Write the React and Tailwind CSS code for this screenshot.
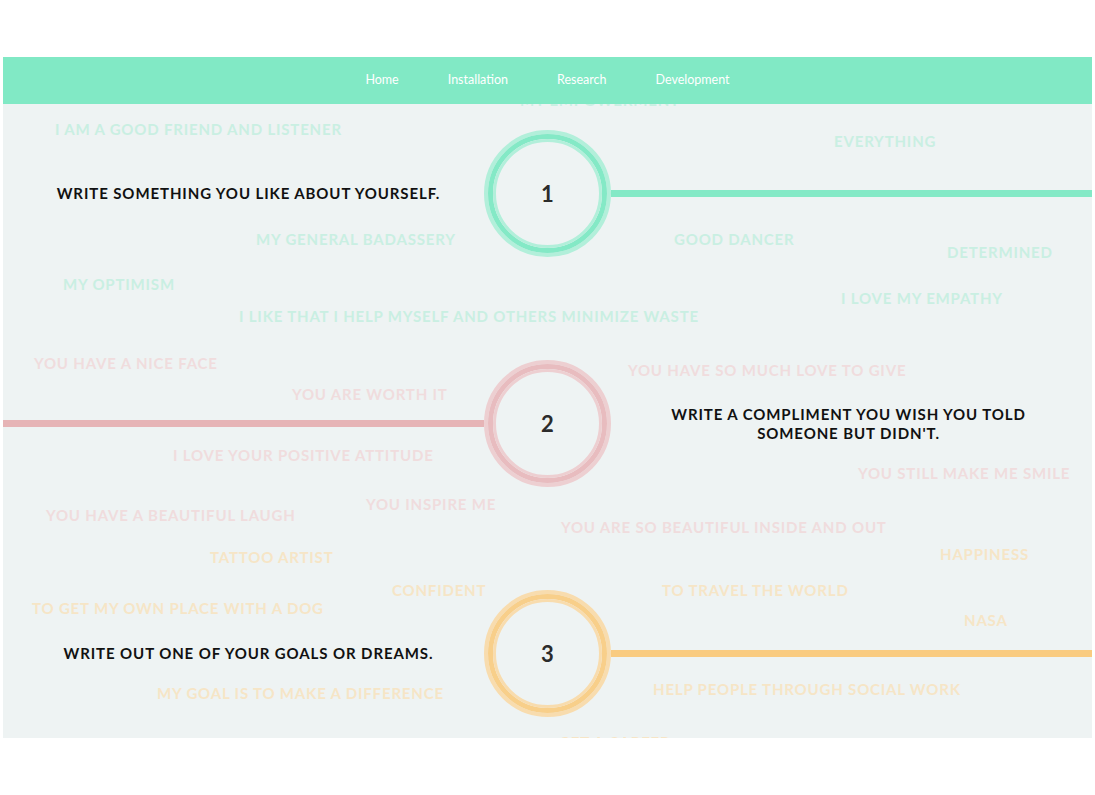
import React from "react";

const links = ["Home", "Installation", "Research", "Development"];

// scattered answers, positioned on the canvas (left/top in px)
const words = [
  { t: "MY EMPOWERMENT", x: 517, y: -13, c: "text-[#c9efe2]" },
  { t: "I AM A GOOD FRIEND AND LISTENER", x: 52, y: 16, c: "text-[#c9efe2]" },
  { t: "EVERYTHING", x: 831, y: 28, c: "text-[#c9efe2]" },
  { t: "MY GENERAL BADASSERY", x: 253, y: 126, c: "text-[#c9efe2]" },
  { t: "GOOD DANCER", x: 671, y: 126, c: "text-[#c9efe2]" },
  { t: "DETERMINED", x: 944, y: 139, c: "text-[#c9efe2]" },
  { t: "MY OPTIMISM", x: 60, y: 171, c: "text-[#c9efe2]" },
  { t: "I LOVE MY EMPATHY", x: 838, y: 185, c: "text-[#c9efe2]" },
  { t: "I LIKE THAT I HELP MYSELF AND OTHERS MINIMIZE WASTE", x: 236, y: 203, c: "text-[#c9efe2]" },
  { t: "YOU HAVE A NICE FACE", x: 31, y: 250, c: "text-[#f0dcdd]" },
  { t: "YOU HAVE SO MUCH LOVE TO GIVE", x: 625, y: 257, c: "text-[#f0dcdd]" },
  { t: "YOU ARE WORTH IT", x: 289, y: 281, c: "text-[#f0dcdd]" },
  { t: "I LOVE YOUR POSITIVE ATTITUDE", x: 170, y: 342, c: "text-[#f0dcdd]" },
  { t: "YOU STILL MAKE ME SMILE", x: 855, y: 360, c: "text-[#f0dcdd]" },
  { t: "YOU INSPIRE ME", x: 363, y: 391, c: "text-[#f0dcdd]" },
  { t: "YOU HAVE A BEAUTIFUL LAUGH", x: 43, y: 402, c: "text-[#f0dcdd]" },
  { t: "YOU ARE SO BEAUTIFUL INSIDE AND OUT", x: 558, y: 414, c: "text-[#f0dcdd]" },
  { t: "TATTOO ARTIST", x: 207, y: 444, c: "text-[#f6e5c6]" },
  { t: "HAPPINESS", x: 937, y: 441, c: "text-[#f6e5c6]" },
  { t: "CONFIDENT", x: 389, y: 477, c: "text-[#f6e5c6]" },
  { t: "TO TRAVEL THE WORLD", x: 659, y: 477, c: "text-[#f6e5c6]" },
  { t: "TO GET MY OWN PLACE WITH A DOG", x: 29, y: 495, c: "text-[#f6e5c6]" },
  { t: "NASA", x: 961, y: 507, c: "text-[#f6e5c6]" },
  { t: "MY GOAL IS TO MAKE A DIFFERENCE", x: 154, y: 580, c: "text-[#f6e5c6]" },
  { t: "HELP PEOPLE THROUGH SOCIAL WORK", x: 650, y: 576, c: "text-[#f6e5c6]" },
  { t: "GET A CAREER", x: 556, y: 629, c: "text-[#f6e5c6]" },
];

const Ring = ({ n, light, mid }) => (
  <div className={`w-[127px] h-[127px] shrink-0 rounded-full border-4 ${light}`}>
    <div className={`w-full h-full rounded-full border-[5px] ${mid}`}>
      <div className={`w-full h-full rounded-full border-[3px] ${light} flex items-center justify-center`}>
        <span className="text-[22px] font-bold text-[#2b2b2b]">{n}</span>
      </div>
    </div>
  </div>
);

const Prompt = ({ children, className = "" }) => (
  <div className="flex-1 flex items-center justify-center">
    <p className={`text-center text-[15px] leading-[19px] font-bold tracking-[0.06em] text-[#111] ${className}`}>
      {children}
    </p>
  </div>
);

const Line = ({ color }) => (
  <div className="flex-1 flex items-center">
    <div className={`w-full h-[7px] ${color}`} />
  </div>
);

export default function App() {
  return (
    <div className="min-h-[795px] bg-white pt-[57px] pl-[3px]" style={{ fontFamily: "Lato, 'Noto Sans', sans-serif" }}>
      <div className="w-[1089px]">
        <nav className="relative z-20 h-[47px] bg-[#81e9c5] flex items-center justify-center gap-[49px] text-[12.5px] text-white">
          {links.map((l) => (
            <a key={l} href="#" className="leading-none">
              {l}
            </a>
          ))}
        </nav>

        <section className="relative h-[634px] bg-[#eef3f3] overflow-hidden">
          {words.map((w) => (
            <span
              key={w.t}
              className={`absolute whitespace-nowrap text-[15px] leading-[18px] font-bold tracking-[0.055em] ${w.c}`}
              style={{ left: w.x, top: w.y }}
            >
              {w.t}
            </span>
          ))}

          <div className="relative z-10 flex flex-col gap-[103px] pt-[26px]">
            <div className="flex items-center">
              <Prompt className="ml-[10px]">WRITE SOMETHING YOU LIKE ABOUT YOURSELF.</Prompt>
              <Ring n="1" light="border-[#b2efda]" mid="border-[#84e9c6]" />
              <Line color="bg-[#84e9c6]" />
            </div>
            <div className="flex items-center">
              <Line color="bg-[#e6b4b6]" />
              <Ring n="2" light="border-[#edcfd1]" mid="border-[#e8bcbf]" />
              <Prompt className="mr-[6px]">
                WRITE A COMPLIMENT YOU WISH YOU TOLD
                <br />
                SOMEONE BUT DIDN'T.
              </Prompt>
            </div>
            <div className="flex items-center">
              <Prompt className="ml-[10px]">WRITE OUT ONE OF YOUR GOALS OR DREAMS.</Prompt>
              <Ring n="3" light="border-[#f8dcae]" mid="border-[#f8cf8a]" />
              <Line color="bg-[#f9cb80]" />
            </div>
          </div>
        </section>
      </div>
    </div>
  );
}
